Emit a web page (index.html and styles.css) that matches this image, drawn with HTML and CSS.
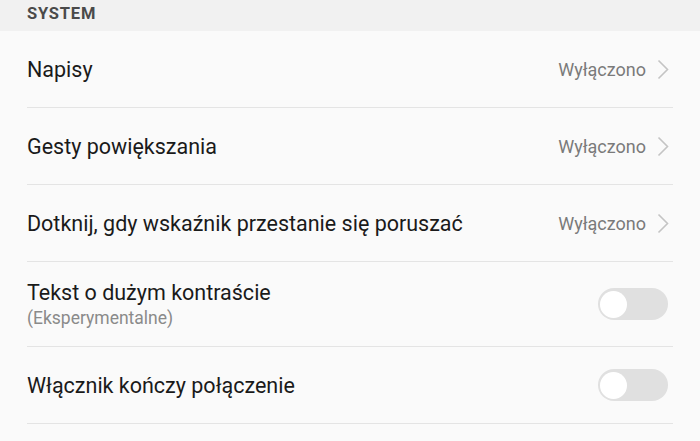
FILE: index.html
```html
<!DOCTYPE html>
<html lang="pl">
<head>
  <meta charset="UTF-8" />
  <meta name="viewport" content="width=device-width, initial-scale=1.0"/>
  <title>Ułatwienia dostępu</title>
  <link rel="stylesheet" href="styles.css">
</head>
<body>
  <div class="section-title">SYSTEM</div>

  <ul class="settings">
    <li class="item">
      <span class="label">Napisy</span>
      <span class="value">Wyłączono
        <svg class="chevron" width="12" height="21" viewBox="0 0 12 21"><path d="M1.5 1.5 L10.5 10.5 L1.5 19.5" fill="none" stroke="#c4c4c4" stroke-width="1.6"/></svg>
      </span>
    </li>
    <li class="item">
      <span class="label">Gesty powiększania</span>
      <span class="value">Wyłączono
        <svg class="chevron" width="12" height="21" viewBox="0 0 12 21"><path d="M1.5 1.5 L10.5 10.5 L1.5 19.5" fill="none" stroke="#c4c4c4" stroke-width="1.6"/></svg>
      </span>
    </li>
    <li class="item">
      <span class="label">Dotknij, gdy wskaźnik przestanie się poruszać</span>
      <span class="value">Wyłączono
        <svg class="chevron" width="12" height="21" viewBox="0 0 12 21"><path d="M1.5 1.5 L10.5 10.5 L1.5 19.5" fill="none" stroke="#c4c4c4" stroke-width="1.6"/></svg>
      </span>
    </li>
    <li class="item item-tall">
      <div>
        <div class="label">Tekst o dużym kontraście</div>
        <div class="sub">(Eksperymentalne)</div>
      </div>
      <span class="switch"><span class="knob"></span></span>
    </li>
    <li class="item">
      <span class="label">Włącznik kończy połączenie</span>
      <span class="switch"><span class="knob"></span></span>
    </li>
  </ul>
</body>
</html>
```

FILE: styles.css
```css
body {
  margin: 0;
  font-family: Roboto, "Noto Sans", sans-serif;
  background-color: #fafafa;
  color: #1a1a1a;
}

.section-title {
  background-color: #f1f1f1;
  height: 31px;
  padding-left: 27px;
  font-size: 16.5px;
  font-weight: bold;
  letter-spacing: 0.8px;
  color: #4a4a4a;
  line-height: 27px;
}

.settings {
  list-style: none;
  margin: 0;
  padding: 0 27px;
}

.item {
  display: flex;
  align-items: center;
  justify-content: space-between;
  height: 76px;
  border-bottom: 1px solid #e4e4e4;
}

.item-tall {
  height: 84px;
}

.label {
  font-size: 21.5px;
}

.sub {
  font-size: 17.5px;
  color: #8a8a8a;
  margin-top: 3px;
}

.value {
  display: flex;
  align-items: center;
  gap: 11px;
  font-size: 18px;
  color: #7a7a7a;
  margin-right: 4px;
}

.switch {
  width: 70px;
  height: 32px;
  border-radius: 16px;
  background-color: #e0e0e0;
  display: flex;
  align-items: center;
  padding-left: 2px;
  box-sizing: border-box;
  margin-right: 5px;
}

.knob {
  width: 27px;
  height: 27px;
  border-radius: 50%;
  background-color: #ffffff;
}
```
